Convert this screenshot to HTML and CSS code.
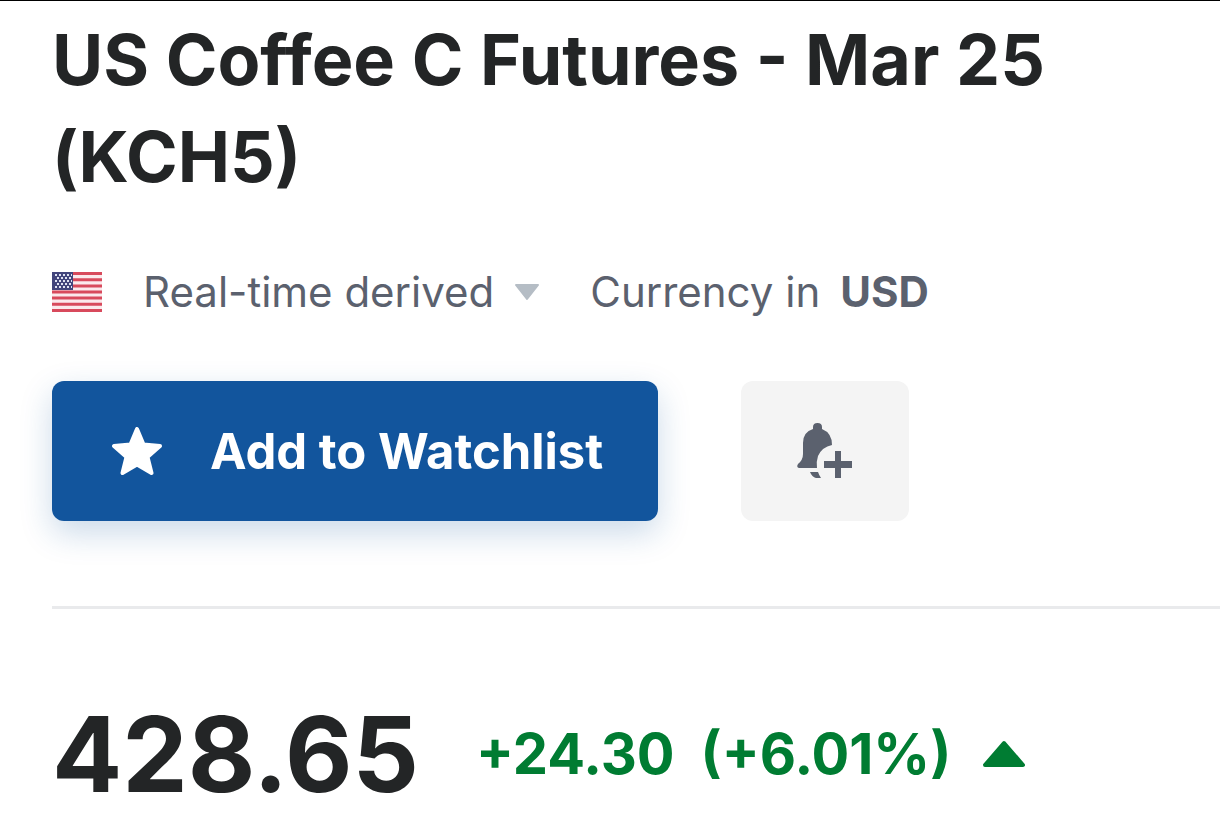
FILE: index.html
```
<!DOCTYPE html>
<html lang="en">
<head>
<meta charset="utf-8">
<meta name="viewport" content="width=device-width, initial-scale=1">
<title>US Coffee C Futures - Mar 25 (KCH5)</title>
<link rel="stylesheet" href="styles.css">
</head>
<body>
<main class="quote">
  <h1 class="title">US Coffee C Futures - Mar 25 (KCH5)</h1>
  <div class="meta">
    <svg class="flag" viewBox="0 0 50 40" role="img" aria-label="United States">
      <rect width="50" height="40" fill="#fbe9ec"/>
      <path d="M0 1.500H50M0 7.700H50M0 13.900H50M0 20H50M0 26.100H50M0 32.300H50M0 38.500H50" stroke="#d84a5c" stroke-width="3"/>
      <rect width="21" height="18" fill="#42457c"/>
      <path d="M3 3H20M5 6H20M3 9H20M5 12H20M3 15H20" stroke="#dfe2f2" stroke-width="1.800" stroke-dasharray="2 2"/>
    </svg>
    <button class="source" type="button">Real-time derived
      <svg class="caret" viewBox="0 0 26 18" aria-hidden="true"><path d="M2 2H24L13 16Z" fill="#b5bdc5" stroke="#b5bdc5" stroke-width="2" stroke-linejoin="round"/></svg>
    </button>
    <p class="currency">Currency in <strong>USD</strong></p>
  </div>
  <div class="actions">
    <button class="watch" type="button">
      <svg class="star" viewBox="0 0 50 48" aria-hidden="true"><path d="M25 2L31.500 17.500L48 19L35.500 30L39.500 46L25 37.500L10.500 46L14.500 30L2 19L18.500 17.500Z" fill="#fff" stroke="#fff" stroke-width="4" stroke-linejoin="round"/></svg>
      Add to Watchlist
    </button>
    <button class="alert" type="button" aria-label="Create alert">
      <svg class="bell" viewBox="0 0 58 58" aria-hidden="true">
        <path d="M3 46Q0 45 2 42Q7 38 7 32V21Q7 10 17 7V5Q17 1 21.500 1Q26 1 26 5V7Q36 11 36 23Q26 25 22 34Q20 40 21 46Z" fill="#5b616e"/>
        <path d="M14 50H22Q23 53 25 56H20Q16 55 14 50ZM39 29H45V39H56V46H45V56H39V46H28V39H39Z" fill="#5b616e"/>
      </svg>
    </button>
  </div>
  <div class="price-row">
    <span class="price">428.65</span>
    <span class="change">+24.30</span>
    <span class="percent">(+6.01%)</span>
    <svg class="up" viewBox="0 0 44 28" role="img" aria-label="Up"><path d="M3 25L22 3L41 25Z" fill="#007c32" stroke="#007c32" stroke-width="4" stroke-linejoin="round"/></svg>
  </div>
</main>
</body>
</html>
```
FILE: styles.css
```
* { box-sizing: border-box; }
body { margin: 0; background: #fff; color: #232526; font-family: Inter, sans-serif; }
button { border: 0; font: inherit; cursor: pointer; }
svg { flex: none; display: block; }
.quote { padding: 10px 0 0 52px; border-top: 1px solid #000; }
.title { margin: 0; padding-right: 120px; font-size: 70px; line-height: 97px; font-weight: 700; }
.meta { display: flex; align-items: center; margin-top: 62px; height: 50px; font-size: 42px; line-height: 50px; color: #5b616e; }
.flag { width: 50px; height: 40px; margin-right: 41px; }
.source { display: flex; align-items: center; gap: 20px; padding: 0; background: none; color: inherit; }
.caret { width: 26px; height: 18px; }
.currency { display: flex; gap: 20px; margin: 0 0 0 50px; }
.actions { display: flex; gap: 83px; padding: 64px 0 85px; border-bottom: 3px solid #e9eaec; }
.watch { display: flex; align-items: center; gap: 48px; height: 140px; padding: 0 55px 0 60px; border-radius: 12px; background: #12559d; color: #fff; font-size: 49px; font-weight: 700; box-shadow: 0 12px 32px rgba(18, 85, 157, .22); }
.star { width: 50px; height: 48px; }
.alert { display: grid; place-items: center; width: 168px; height: 140px; border-radius: 12px; background: #f4f4f4; }
.bell { width: 58px; height: 58px; }
.price-row { display: flex; align-items: center; margin-top: 80px; font-weight: 700; line-height: 130px; }
.price { font-size: 104px; }
.change, .percent { color: #007c32; font-size: 56px; font-weight: 700; }
.change { margin-left: 57px; }
.percent { margin-left: 26px; }
.up { width: 44px; height: 28px; margin-left: 31px; }
```
